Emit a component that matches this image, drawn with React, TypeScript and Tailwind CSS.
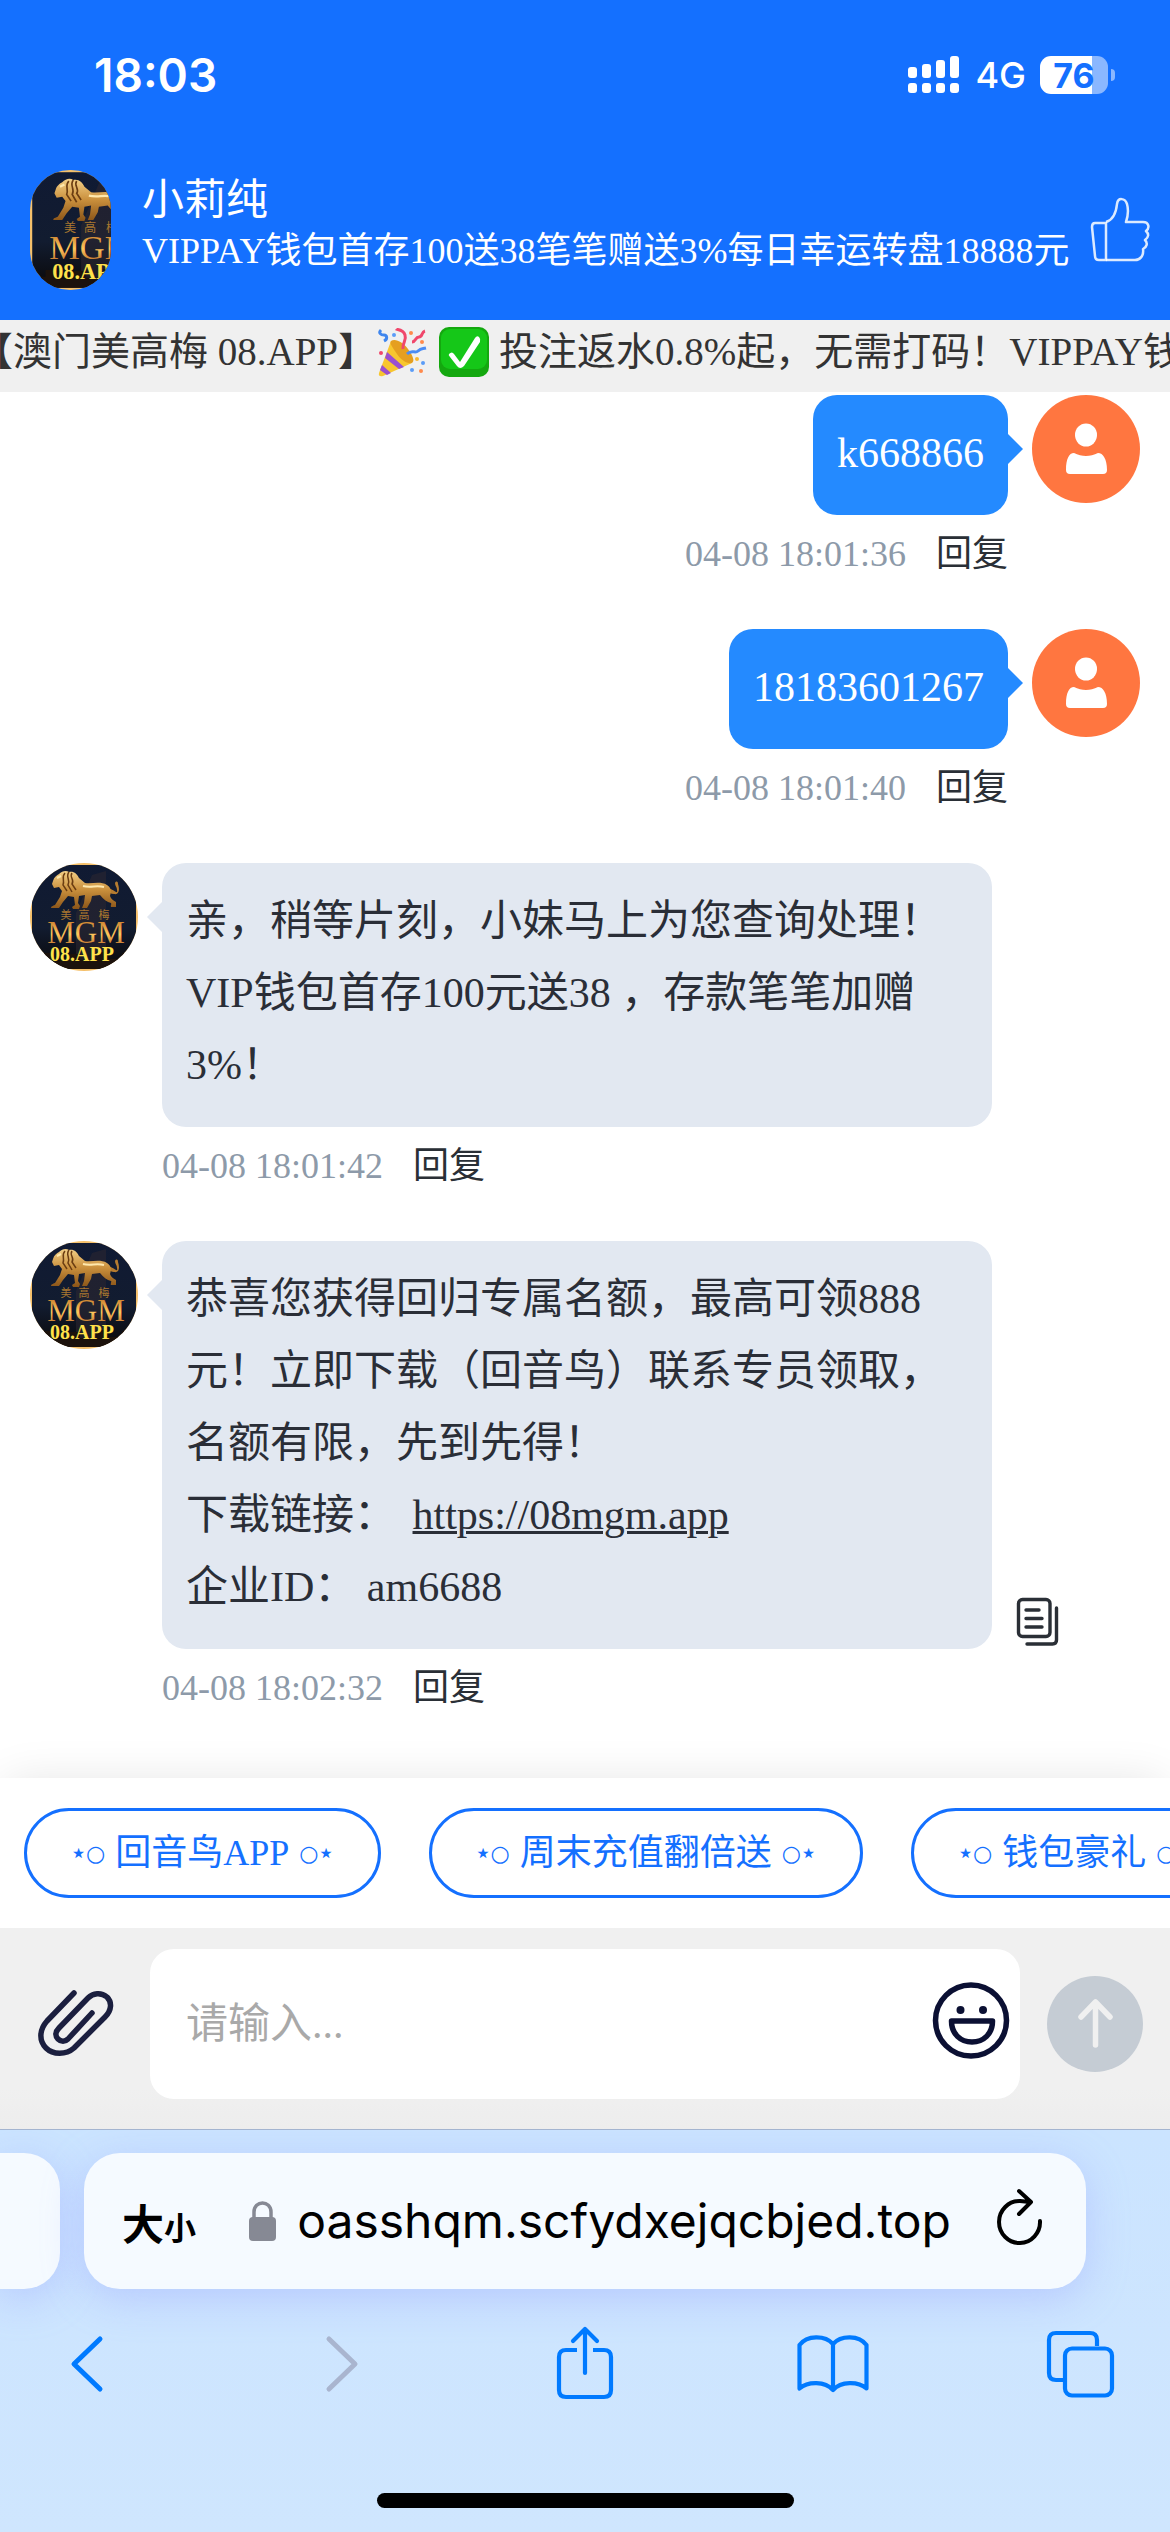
import type { ReactNode } from "react";

const quickReplies = ["回音鸟APP", "周末充值翻倍送", "钱包豪礼"];

function BrandArt({ className }: { className: string }) {
  return (
    <svg viewBox="0 0 108 108" preserveAspectRatio="xMinYMid slice" className={className} role="img" aria-label="MGM">
      <defs>
        <linearGradient id="night" x1="0" y1="0" x2="0" y2="1">
          <stop offset="0" stopColor="#101a33" />
          <stop offset="0.6" stopColor="#121c30" />
          <stop offset="1" stopColor="#0a0808" />
        </linearGradient>
        <linearGradient id="gold" x1="0" y1="0" x2="0" y2="1">
          <stop offset="0" stopColor="#f3cf86" />
          <stop offset="0.5" stopColor="#c98f3c" />
          <stop offset="1" stopColor="#8a5418" />
        </linearGradient>
        <linearGradient id="letters" x1="0" y1="0" x2="0" y2="1">
          <stop offset="0" stopColor="#b5651d" />
          <stop offset="0.55" stopColor="#ffc65c" />
          <stop offset="1" stopColor="#a8501a" />
        </linearGradient>
      </defs>
      <rect width="108" height="108" fill="#f5c06a" />
      <rect x="2" y="2" width="104" height="104" fill="url(#night)" />
      <path d="M46 50 62 12l14-4v92H46z" fill="#2b2731" opacity="0.6" />
      <path d="M2 96h12v-6h10v8h14v-7h12v6h16v-8h12v7h14v-6h14v16H2z" fill="#1c120c" />
      {/* lion */}
      <path d="M78 25c7 2 10 7 9 2 0-3-2-4-2-7 1-2 3-2 3 1 2 6 1 11-4 10-3 0-6-2-8-3z" fill="#b67c30" />
      <path
        d="M23 18c1-4 4-6 6-7 3-3 7-4 10-2 5-1 8 2 10 6l6 5c8 1 15-2 22 2 5 3 4 8 3 11 1 3 3 4 6 6v5h-5c-1-1 1-3 0-4-4-1-8-4-11-8l-8 1-1 5-4 7h-5l2-5 1-8-6 1-1 7 2 3-1 3h-6l-1-2 3-2-1-8-6-1-5 6-4 6h-8c0-2 2-2 4-3l5-8 2-6-3-4-5 1-2-4z"
        fill="url(#gold)"
      />
      <path d="M35 10c-4 4 0 7-2 12l4 6m2-19c-4 5 2 8-1 13l4 7m0-19c-3 4 3 7 0 11l4 6" stroke="#6b3d12" strokeWidth="1.5" fill="none" />
      <path d="M53 23c8 2 13-1 21 1M27 15l4-2" stroke="#ffe8ad" strokeWidth="2" fill="none" />
      <g fill="#a8772f" fontSize="11" textAnchor="middle" fontFamily="Noto Sans CJK SC">
        <text x="36" y="56">美</text>
        <text x="54" y="56">高</text>
        <text x="74" y="56">梅</text>
      </g>
      <text x="56" y="80" fontSize="31" textAnchor="middle" fill="url(#letters)" fontFamily="Liberation Serif">
        MGM
      </text>
      <text x="20" y="98" fontSize="20" fontWeight="700" fill="#ffe14a" fontFamily="Liberation Serif">
        08.APP
      </text>
    </svg>
  );
}

function UserAvatar() {
  return (
    <svg viewBox="0 0 108 108" className="size-[108px] shrink-0" role="img" aria-label="user">
      <circle cx="54" cy="54" r="54" fill="#ff7640" />
      <ellipse cx="54" cy="40" rx="11" ry="11.5" fill="#fff" />
      <path d="M42 58c8 4 16 4 24 0 5 0 9 6 9 17q0 4-4 4H38q-4 0-4-4c0-11 3-17 8-17z" fill="#fff" />
    </svg>
  );
}

function StatusBar() {
  return (
    <div className="flex h-[150px] items-center justify-between pl-[94px] pr-[55px] font-['Inter','Liberation_Sans',sans-serif] text-white">
      <span className="text-[46px] font-semibold">18:03</span>
      <div className="flex items-center">
        <svg viewBox="0 0 51 38" className="h-[38px] w-[51px]" fill="#fff">
          <rect x="0" y="11" width="9" height="11" rx="3" />
          <rect x="14" y="8" width="9" height="14" rx="3" />
          <rect x="28" y="4" width="9" height="18" rx="3" />
          <rect x="42" y="0" width="9" height="22" rx="3" />
          <rect x="0" y="27" width="9" height="10" rx="3" />
          <rect x="14" y="27" width="9" height="10" rx="3" />
          <rect x="28" y="27" width="9" height="10" rx="3" />
          <rect x="42" y="27" width="9" height="10" rx="3" />
        </svg>
        <span className="ml-4 text-[36px] font-medium">4G</span>
        <div className="ml-[14px] flex h-[38px] w-[68px] items-center justify-center rounded-[11px] bg-linear-to-r from-white from-76% to-[#8ab7ff] to-76% text-[34px] font-bold text-[#1470ff]">
          76
        </div>
        <div className="ml-[3px] h-3 w-1 rounded-r-full bg-[#8ab7ff]" />
      </div>
    </div>
  );
}

function ChatHeader() {
  return (
    <header className="flex h-[170px] items-center pb-[10px] pl-[30px] pr-[20px] text-white">
      <BrandArt className="h-[120px] w-[81px] shrink-0 rounded-[40px]" />
      <div className="ml-[31px] min-w-0 flex-1 pb-3 whitespace-nowrap">
        <h1 className="text-[42px] leading-[54px]">小莉纯</h1>
        <p className="text-[36px] leading-[48px]">VIPPAY钱包首存100送38笔笔赠送3%每日幸运转盘18888元</p>
      </div>
      <button type="button" aria-label="点赞">
        <svg viewBox="0 0 60 68" className="h-[68px] w-[60px]" fill="none" stroke="#fff" strokeOpacity="0.85" strokeWidth="2.5" strokeLinejoin="round">
          <path d="M16 27H5q-3 0-3 4l3 29q0 4 4 4h7z" />
          <path d="M16 26c7-2 10-8 11-18 1-7 8-6 10 0 2 7 1 12-1 18h17c6 0 7 6 3 9 3 3 3 6-1 9 3 3 2 7-2 9 1 7-3 11-8 11H16" />
        </svg>
      </button>
    </header>
  );
}

function Notice() {
  return (
    <div className="h-[72px] overflow-hidden bg-[#f0f0f0] text-[39px] leading-[64px] text-[#333]">
      <div className="-ml-[26px] flex items-center whitespace-nowrap">
        <span>【澳门美高梅 08.APP】</span>
        <svg viewBox="0 0 50 50" className="size-[50px] shrink-0" role="img" aria-label="🎉">
          <path d="M2 46 14 14c8 2 18 12 21 22L6 49q-5 1-4-3z" fill="#f8c62f" />
          <path d="M14 14c4-3 12 1 17 8s7 12 4 14c-5 1-11-3-15-9s-8-11-6-13z" fill="#e59f20" />
          <path d="m10 25 17 15-5 2L8 31zM5 38l9 8-4 2-7-5z" fill="#9a4fd0" />
          <path d="M4 3c-3 3 0 5 3 5s4 4 0 6" stroke="#3f86ee" strokeWidth="3" fill="none" />
          <path d="M26 22c-1-7 4-8 2-14s-8-5-9-6" stroke="#f0476b" strokeWidth="3" fill="none" />
          <path d="M30 27c5-5 8 0 11-3s4-2 8-3" stroke="#4a8cf5" strokeWidth="3" fill="none" />
          <path d="M35 15c4 0 3-5 7-5s2-5 6-6" stroke="#f0476b" strokeWidth="3" fill="none" />
          <g fill="#ff8a4c">
            <circle cx="45" cy="15" r="2" />
            <circle cx="34" cy="6" r="2" />
            <circle cx="44" cy="44" r="2" />
          </g>
          <g fill="#5b9cf7">
            <circle cx="17" cy="8" r="2" />
            <circle cx="35" cy="43" r="2" />
            <circle cx="46" cy="36" r="2" />
          </g>
          <circle cx="4" cy="26" r="2" fill="#f0476b" />
          <circle cx="40" cy="32" r="2" fill="#f7b733" />
        </svg>
        <svg viewBox="0 0 50 50" className="ml-3 size-[50px] shrink-0" role="img" aria-label="✅">
          <rect width="50" height="50" rx="10" fill="#14a80f" />
          <rect x="2" y="2" width="46" height="40" rx="9" fill="#15c718" />
          <path d="M10 27q3-3 5 0l6 8 15-24q2-3 4-1t1 5L25 39q-4 4-7 0l-7-9q-2-2-1-3z" fill="#fff" />
        </svg>
        <span className="ml-[10px]">投注返水0.8%起，无需打码！VIPPAY钱包首存</span>
      </div>
    </div>
  );
}

function MessageMeta({ time }: { time: string }) {
  return (
    <div className="mt-3 flex items-center gap-[30px] text-[36px] leading-[54px]">
      <time className="text-[#8d9aa9]">{time}</time>
      <button type="button" className="text-[#2a2f36]">
        回复
      </button>
    </div>
  );
}

function SentMessage({ text, time }: { text: string; time: string }) {
  return (
    <div className="flex items-start justify-end gap-6">
      <div className="flex flex-col items-end">
        <div className="relative rounded-3xl bg-[#248aff] px-6 pt-[22px] pb-[26px] text-[42px] leading-[72px] text-white">
          {text}
          <span className="absolute left-full top-[39px] border-y-15 border-l-15 border-y-transparent border-l-[#248aff]" />
        </div>
        <MessageMeta time={time} />
      </div>
      <UserAvatar />
    </div>
  );
}

function ReceivedMessage({ children, time, copyable }: { children: ReactNode; time: string; copyable?: boolean }) {
  return (
    <div className="flex items-start">
      <BrandArt className="size-[108px] shrink-0 rounded-full" />
      <div className="ml-6 flex-1">
        <div className="flex items-end">
          <div className="relative flex-1 rounded-3xl bg-[#e2e8f1] px-6 pt-[22px] pb-[26px] text-[42px] leading-[72px] text-[#2a2e37]">
            {children}
            <span className="absolute right-full top-[39px] border-y-15 border-r-15 border-y-transparent border-r-[#e2e8f1]" />
          </div>
          <div className="w-[148px] shrink-0 pl-6">
            {copyable && (
              <button type="button" aria-label="复制" className="block">
                <svg viewBox="0 0 43 52" className="h-[52px] w-[43px]" fill="none" stroke="#2a2f36" strokeWidth="3.4" strokeLinecap="round">
                  <rect x="2.5" y="2.5" width="31.5" height="37" rx="4" />
                  <path d="M10 13h13M10 21.500h16M10 30h16" />
                  <path d="M40.500 11v32q0 4-4 4H11" />
                </svg>
              </button>
            )}
          </div>
        </div>
        <MessageMeta time={time} />
      </div>
    </div>
  );
}

function QuickReplies() {
  return (
    <div className="flex gap-12 overflow-hidden bg-white px-6 py-[30px] shadow-[0_0_45px_-6px_rgba(0,0,0,0.12)]">
      {quickReplies.map((label) => (
        <button
          key={label}
          type="button"
          className="flex h-[90px] shrink-0 items-center gap-[10px] rounded-full border-3 border-[#1470ff] px-[44px] text-[36px] whitespace-nowrap text-[#1470ff]"
        >
          <span className="flex items-center font-['DejaVu_Sans',sans-serif] text-[22px]">
            <span className="text-[24px] font-bold">⋆</span>○
          </span>
          {label}
          <span className="flex items-center font-['DejaVu_Sans',sans-serif] text-[22px]">
            ○<span className="text-[24px] font-bold">⋆</span>
          </span>
        </button>
      ))}
    </div>
  );
}

function Composer() {
  return (
    <form className="flex items-center bg-linear-to-b from-[#f0f0f0] from-80% to-[#ededed] pt-[21px] pr-[27px] pb-[30px] pl-[36px]">
      <button type="button" aria-label="附件">
        <svg viewBox="0 0 78 72" className="h-[72px] w-[78px]" fill="none" stroke="#1b1f3f" strokeWidth="5.5" strokeLinecap="round" strokeLinejoin="round">
          <path d="M38 5 11 33C3 42 3 53 10 60c7 7 20 7 28 0l31-31c7-7 7-15 2-20-6-5-14-4-19 1L23 40c-4 4-4 8-1 11s7 3 10 0l24-26" />
        </svg>
      </button>
      <div className="ml-9 flex h-[150px] flex-1 items-center rounded-3xl bg-white pr-[10px] pl-9">
        <input
          aria-label="消息"
          placeholder="请输入..."
          className="h-[72px] w-0 flex-1 text-[42px] outline-none placeholder:text-[#a9a9a9]"
        />
        <button type="button" aria-label="表情">
          <svg viewBox="0 0 78 84" className="h-[84px] w-[78px]" fill="none" stroke="#0b1033" strokeWidth="5.5" strokeLinejoin="round">
            <circle cx="39" cy="38.500" r="35.500" />
            <g fill="#0b1033" stroke="none">
              <circle cx="28.500" cy="28" r="4" />
              <circle cx="51" cy="28" r="4" />
            </g>
            <path d="M19.500 39h41c0 13-9 21-20.500 21s-20.500-8-20.500-21z" />
          </svg>
        </button>
      </div>
      <button type="button" aria-label="发送" className="ml-[27px]">
        <svg viewBox="0 0 96 96" className="size-24" fill="none" stroke="#f0f0f0" strokeWidth="5.5" strokeLinecap="round" strokeLinejoin="round">
          <circle cx="48" cy="48" r="48" fill="#c5ccd4" stroke="none" />
          <path d="M48.500 69V27M34 41l14.500-15L63 41" />
        </svg>
      </button>
    </form>
  );
}

function BrowserBar() {
  return (
    <footer className="flex flex-1 flex-col overflow-hidden border-t border-[#a3b4d0] bg-linear-to-b from-[#cbe4ff] to-[#cfe6fe] font-['Inter','Liberation_Sans','Noto_Sans_CJK_SC',sans-serif] text-black">
      <div className="flex gap-6 pt-[23px] pr-[84px]">
        <div className="h-[136px] w-[60px] shrink-0 rounded-r-[36px] bg-[#f5faff] shadow-[0_9px_40px_rgba(150,160,255,0.4)]" />
        <div className="flex h-[136px] flex-1 items-center justify-between rounded-[36px] bg-[#f5faff] pr-[42px] pl-[38px] shadow-[0_9px_40px_rgba(150,160,255,0.4)]">
          <button type="button" className="flex items-baseline font-['Noto_Sans_CJK_SC',sans-serif] font-bold whitespace-nowrap">
            <span className="text-[42px]">大</span>
            <span className="text-[32px]">小</span>
          </button>
          <div className="flex items-center gap-[21px] pl-2">
            <svg viewBox="0 0 27 40" className="h-10 w-[27px]">
              <rect y="16" width="27" height="24" rx="4" fill="#868994" />
              <path d="M5 18v-7c0-12 17-12 17 0v7" fill="none" stroke="#868994" strokeWidth="3.500" />
            </svg>
            <span className="text-[48px] leading-[60px] whitespace-nowrap">oasshqm.scfydxejqcbjed.top</span>
          </div>
          <button type="button" aria-label="刷新">
            <svg viewBox="0 0 48 68" className="h-[68px] w-12" fill="none" stroke="#000" strokeWidth="4" strokeLinecap="round" strokeLinejoin="round">
              <path d="M44 34A20.500 21 0 1 1 24 14l10 1M23 4l12 11-12 12" />
            </svg>
          </button>
        </div>
      </div>
      <nav className="flex h-[150px] items-center justify-between pr-[54px] pl-[50px]">
        <button type="button" aria-label="后退">
          <svg viewBox="0 0 72 72" className="size-[72px]" fill="none" stroke="#007aff" strokeWidth="5" strokeLinecap="round" strokeLinejoin="round">
            <path d="M50 11 24 36l26 25" />
          </svg>
        </button>
        <button type="button" aria-label="前进" disabled>
          <svg viewBox="0 0 72 72" className="size-[72px]" fill="none" stroke="#a9b5cf" strokeWidth="5" strokeLinecap="round" strokeLinejoin="round">
            <path d="m31 11 26 25-26 25" />
          </svg>
        </button>
        <button type="button" aria-label="分享">
          <svg viewBox="-12 -1 76 76" className="size-[76px]" fill="none" stroke="#007aff" strokeWidth="4.200" strokeLinejoin="round">
            <path d="M20 23H9q-7 0-7 7v33q0 7 7 7h38q7 0 7-7V30q0-7-7-7H36" />
            <path d="M28 4v42M16 14 28 2l12 12" strokeLinecap="round" />
          </svg>
        </button>
        <button type="button" aria-label="书签">
          <svg viewBox="0 -7 72 72" className="size-[72px]" fill="none" stroke="#007aff" strokeWidth="4.200" strokeLinejoin="round">
            <path d="M2.500 10C10 0 28 0 36 9c8-9 26-9 33.500 1v43.500C61 46 44 46 36 55c-8-9-25-9-33.500-1.500zM36 9v46" />
          </svg>
        </button>
        <button type="button" aria-label="标签页">
          <svg viewBox="-3 -3 72 72" className="size-[72px]" fill="none" stroke="#007aff" strokeWidth="4.200">
            <path d="M50 15V9q0-7-7-7H9Q2 2 2 9v33q0 7 7 7h7" />
            <rect x="18" y="17.500" width="47" height="47" rx="7" />
          </svg>
        </button>
      </nav>
      <div className="mx-auto mt-auto mb-6 h-[15px] w-[417px] rounded-full bg-black" />
    </footer>
  );
}

export default function App() {
  return (
    <div className="flex min-h-screen flex-col overflow-hidden bg-white font-['Liberation_Serif','Noto_Sans_CJK_SC',serif]">
      <div className="bg-[#1470ff]">
        <StatusBar />
        <ChatHeader />
      </div>
      <Notice />
      <main className="flex flex-col gap-12 pt-[3px] pr-[30px] pb-[63px] pl-[30px]">
        <SentMessage text="k668866" time="04-08 18:01:36" />
        <SentMessage text="18183601267" time="04-08 18:01:40" />
        <ReceivedMessage time="04-08 18:01:42">
          亲，稍等片刻，小妹马上为您查询处理！VIP钱包首存100元送38 ，存款笔笔加赠3%！
        </ReceivedMessage>
        <ReceivedMessage time="04-08 18:02:32" copyable>
          <p>恭喜您获得回归专属名额，最高可领888元！立即下载（回音鸟）联系专员领取，名额有限，先到先得！</p>
          <p>
            下载链接：{" "}
            <a href="https://08mgm.app" className="mx-1.5 underline decoration-3">
              https://08mgm.app
            </a>
          </p>
          <p>企业ID： am6688</p>
        </ReceivedMessage>
      </main>
      <QuickReplies />
      <Composer />
      <BrowserBar />
    </div>
  );
}
